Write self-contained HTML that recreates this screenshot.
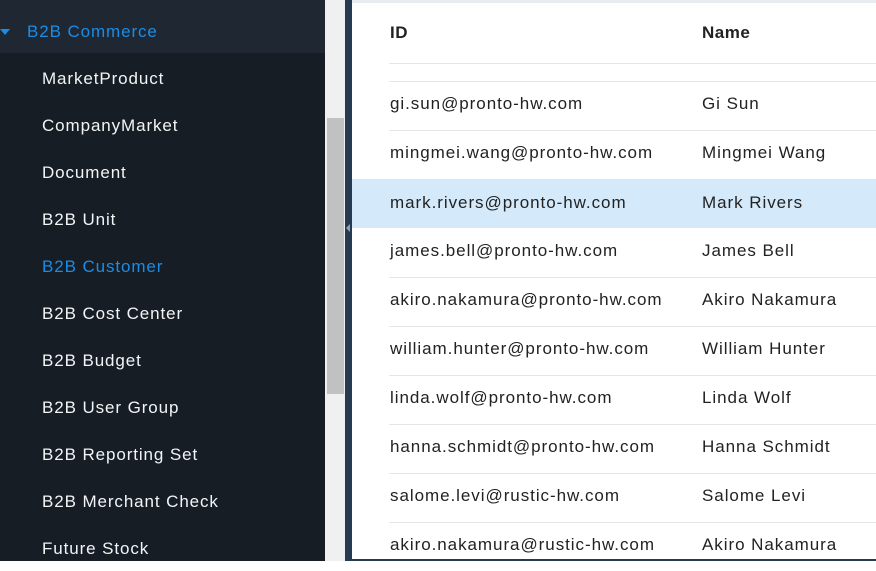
<!DOCTYPE html>
<html><head><style>
*{margin:0;padding:0;box-sizing:border-box}
body{width:876px;height:561px;overflow:hidden;position:relative;font-family:"Liberation Sans","DejaVu Sans",sans-serif;background:#fff}
#side{position:absolute;left:0;top:0;width:325px;height:561px;background:#171d24}
#top{position:absolute;left:0;top:0;width:325px;height:53px;background:#1f2832}
.it{position:absolute;left:42px;color:#f2f4f6;font-size:17px;line-height:20px;letter-spacing:0.9px}
#sb{position:absolute;left:325px;top:0;width:20px;height:561px;background:#f0f0f0}
#th{position:absolute;left:327px;top:118px;width:17px;height:276px;background:#c1c1c1}
#strip{position:absolute;left:345px;top:0;width:7px;height:561px;background:#283a52}
#tl{position:absolute;left:352px;top:0;width:524px;height:3px;background:#e8ecf2}
.row{position:absolute;left:352px;width:524px;height:49px;border-top:1px solid #e6e6e6}
.row span{position:absolute;top:13px;font-size:17px;color:#222;line-height:20px;letter-spacing:0.95px}
.a{left:38px}.b{left:350px}
.hl{background:#d4eafb;border-top-color:#d4eafb}
</style></head><body>
<div id="side"></div><div id="top"></div>
<div style="position:absolute;left:0;top:29px;width:0;height:0;border-left:5px solid transparent;border-right:5px solid transparent;border-top:6px solid #1a8ce6"></div>
<div class="it" style="left:27px;top:22px;color:#1a8ce6">B2B Commerce</div>
<div class="it" style="top:69px">MarketProduct</div>
<div class="it" style="top:116px">CompanyMarket</div>
<div class="it" style="top:163px">Document</div>
<div class="it" style="top:210px">B2B Unit</div>
<div class="it" style="top:257px;color:#1a8ce6">B2B Customer</div>
<div class="it" style="top:304px">B2B Cost Center</div>
<div class="it" style="top:351px">B2B Budget</div>
<div class="it" style="top:398px">B2B User Group</div>
<div class="it" style="top:445px">B2B Reporting Set</div>
<div class="it" style="top:492px">B2B Merchant Check</div>
<div class="it" style="top:539px">Future Stock</div>
<div id="sb"></div><div id="th"></div><div id="strip"></div>
<div style="position:absolute;left:346px;top:224px;width:0;height:0;border-top:4px solid transparent;border-bottom:4px solid transparent;border-right:4px solid #8fa3b8"></div>
<div id="tl"></div>
<div style="position:absolute;left:390px;top:23px;font-size:17px;font-weight:bold;color:#222;letter-spacing:0.5px">ID</div>
<div style="position:absolute;left:702px;top:23px;font-size:17px;font-weight:bold;color:#222;letter-spacing:0.5px">Name</div>
<div style="position:absolute;left:389px;top:63px;width:487px;height:1px;background:#e6e6e6"></div>
<div class="row" style="top:81px;left:389px;width:487px"></div>
<div class="row" style="top:81px;border:none"><span class="a">gi.sun@pronto-hw.com</span><span class="b">Gi Sun</span></div>
<div class="row" style="top:130px;left:389px;width:487px"></div>
<div class="row" style="top:130px;border:none"><span class="a">mingmei.wang@pronto-hw.com</span><span class="b">Mingmei Wang</span></div>
<div class="row hl" style="top:179px"><span class="a">mark.rivers@pronto-hw.com</span><span class="b">Mark Rivers</span></div>
<div class="row" style="top:228px;border:none"><span class="a">james.bell@pronto-hw.com</span><span class="b">James Bell</span></div>
<div class="row" style="top:277px;left:389px;width:487px"></div>
<div class="row" style="top:277px;border:none"><span class="a">akiro.nakamura@pronto-hw.com</span><span class="b">Akiro Nakamura</span></div>
<div class="row" style="top:326px;left:389px;width:487px"></div>
<div class="row" style="top:326px;border:none"><span class="a">william.hunter@pronto-hw.com</span><span class="b">William Hunter</span></div>
<div class="row" style="top:375px;left:389px;width:487px"></div>
<div class="row" style="top:375px;border:none"><span class="a">linda.wolf@pronto-hw.com</span><span class="b">Linda Wolf</span></div>
<div class="row" style="top:424px;left:389px;width:487px"></div>
<div class="row" style="top:424px;border:none"><span class="a">hanna.schmidt@pronto-hw.com</span><span class="b">Hanna Schmidt</span></div>
<div class="row" style="top:473px;left:389px;width:487px"></div>
<div class="row" style="top:473px;border:none"><span class="a">salome.levi@rustic-hw.com</span><span class="b">Salome Levi</span></div>
<div class="row" style="top:522px;left:389px;width:487px"></div>
<div class="row" style="top:522px;border:none"><span class="a">akiro.nakamura@rustic-hw.com</span><span class="b">Akiro Nakamura</span></div>
<div style="position:absolute;left:352px;top:559px;width:524px;height:2px;background:#283a52"></div>
</body></html>
